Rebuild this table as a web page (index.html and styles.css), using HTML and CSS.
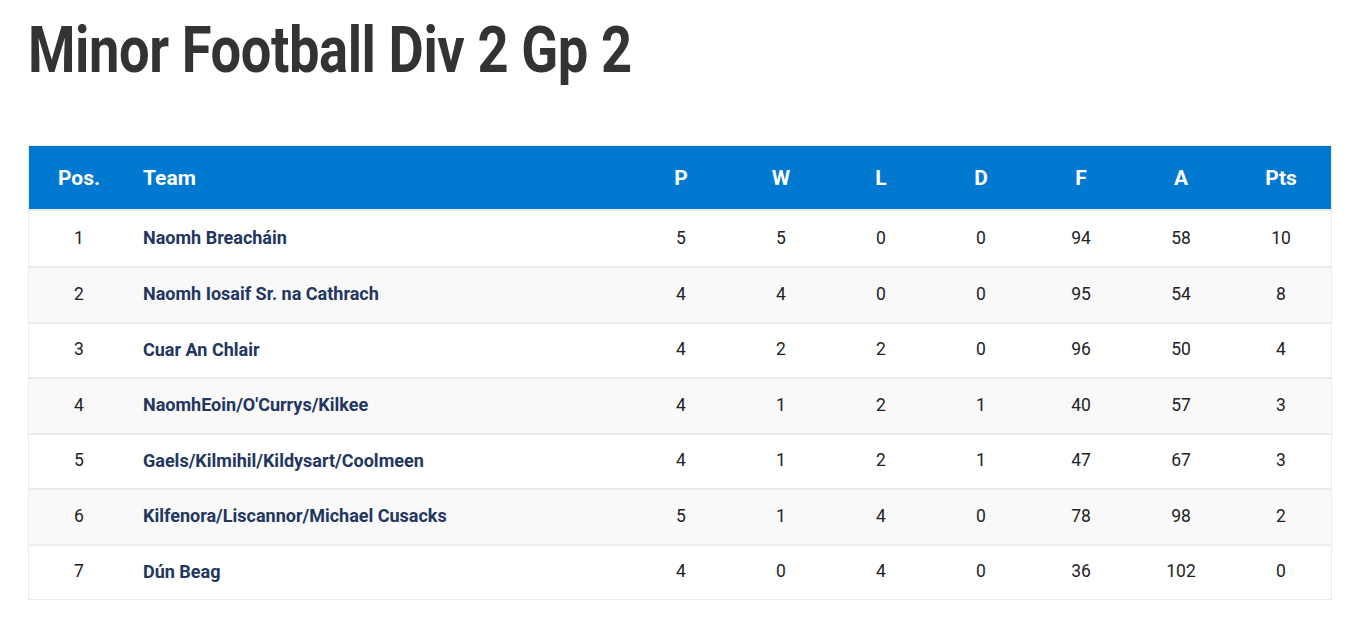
FILE: index.html
```html
<!DOCTYPE html>
<html>
<head>
<meta charset="utf-8">
<link rel="stylesheet" href="styles.css">
</head>
<body>
<h1 class="title"><span class="title-text">Minor Football Div 2 Gp 2</span></h1>
<table class="league">
  <thead>
    <tr><th class="pos">Pos.</th><th class="team">Team</th><th>P</th><th>W</th><th>L</th><th>D</th><th>F</th><th>A</th><th>Pts</th></tr>
  </thead>
  <tbody>
    <tr><td class="pos">1</td><td class="team">Naomh Breacháin</td><td>5</td><td>5</td><td>0</td><td>0</td><td>94</td><td>58</td><td>10</td></tr>
    <tr><td class="pos">2</td><td class="team">Naomh Iosaif Sr. na Cathrach</td><td>4</td><td>4</td><td>0</td><td>0</td><td>95</td><td>54</td><td>8</td></tr>
    <tr><td class="pos">3</td><td class="team">Cuar An Chlair</td><td>4</td><td>2</td><td>2</td><td>0</td><td>96</td><td>50</td><td>4</td></tr>
    <tr><td class="pos">4</td><td class="team">NaomhEoin/O'Currys/Kilkee</td><td>4</td><td>1</td><td>2</td><td>1</td><td>40</td><td>57</td><td>3</td></tr>
    <tr><td class="pos">5</td><td class="team">Gaels/Kilmihil/Kildysart/Coolmeen</td><td>4</td><td>1</td><td>2</td><td>1</td><td>47</td><td>67</td><td>3</td></tr>
    <tr><td class="pos">6</td><td class="team">Kilfenora/Liscannor/Michael Cusacks</td><td>5</td><td>1</td><td>4</td><td>0</td><td>78</td><td>98</td><td>2</td></tr>
    <tr><td class="pos">7</td><td class="team">Dún Beag</td><td>4</td><td>0</td><td>4</td><td>0</td><td>36</td><td>102</td><td>0</td></tr>
  </tbody>
</table>
</body>
</html>
```

FILE: styles.css
```css
html, body {
  margin: 0;
  padding: 0;
  background: #fff;
}
body {
  padding: 0 21px 0 28px;
  font-family: Roboto, "Liberation Sans", sans-serif;
  color: #222;
}
.title {
  margin: 13px 0 0 0;
  height: 132px;
  font-size: 64px;
  line-height: 75px;
  font-weight: 700;
  color: #333;
  white-space: nowrap;
}
.title-text {
  display: inline-block;
  transform: scaleX(0.848);
  transform-origin: left center;
  letter-spacing: -0.5px;
}
.league {
  width: 100%;
  border-collapse: collapse;
  border: 1px solid #ececec;
  table-layout: fixed;
}
.league th {
  background: #0279d0;
  color: #fff;
  font-size: 21px;
  font-weight: 700;
  height: 63px;
  padding: 0;
  text-align: center;
  border-bottom: 2px solid #e4ebf0;
}
.league th, .league td { width: 100px; }
.league .team { width: auto; text-align: left; padding-left: 14px; }
.league td {
  height: 51.5px;
  padding: 0 0 2px 0;
  text-align: center;
  font-size: 17.5px;
  border-top: 2px solid #ececec;
}
.league tbody tr:first-child td { border-top: none; height: 53px; }
.league tbody tr:nth-child(even) td { background: #f9f9f9; }
.league td.team {
  font-weight: 700;
  font-size: 18px;
  color: #223660;
}
```
